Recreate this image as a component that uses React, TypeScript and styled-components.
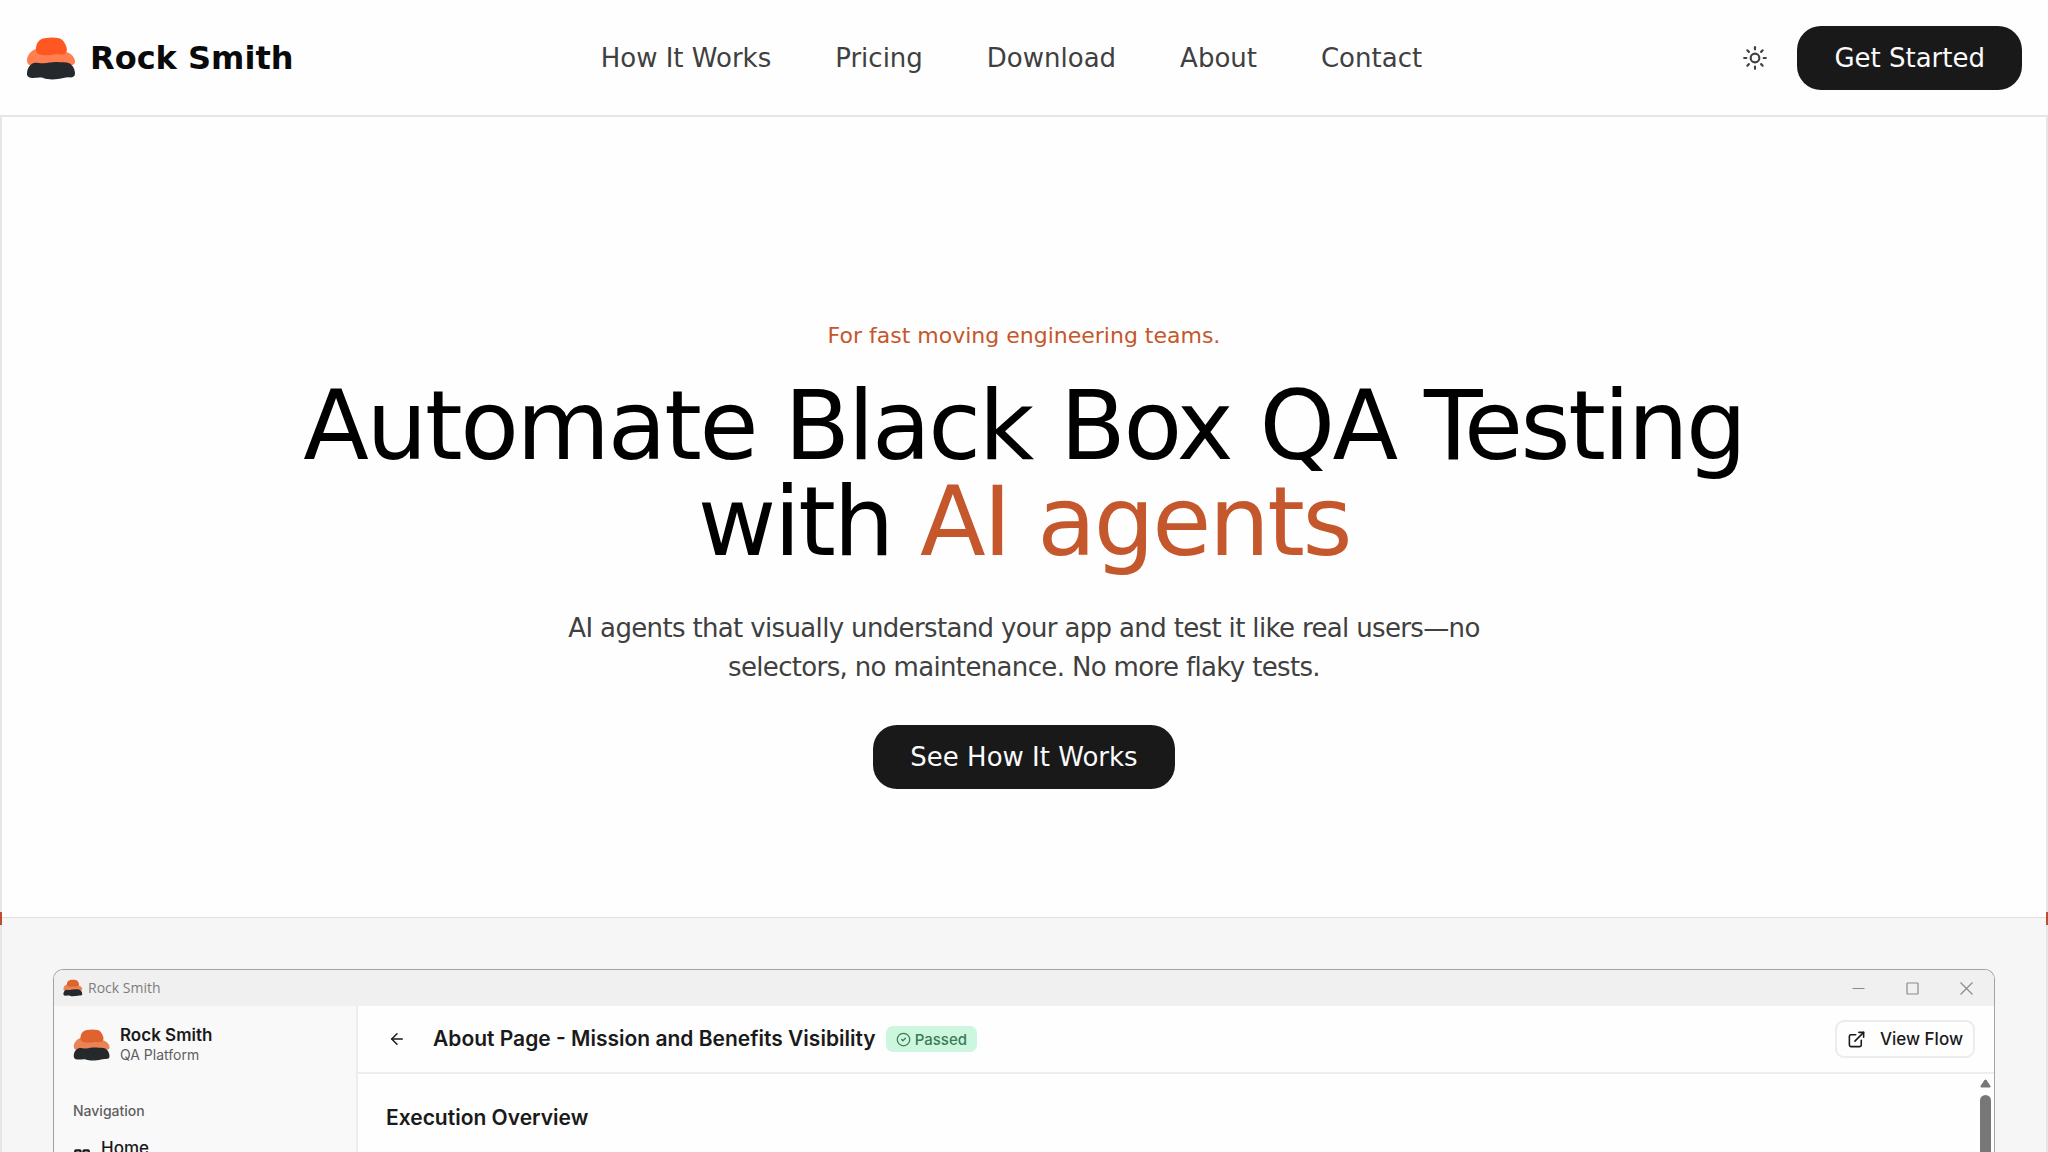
import React from "react";
import styled, { createGlobalStyle } from "styled-components";
import {
  ArrowLeft,
  CircleCheck,
  ExternalLink,
  LayoutGrid,
  Sun,
} from "lucide-react";

const accent = "#c4572b";
const line = "#e5e7e7";
const ink = "#191919";

const GlobalStyle = createGlobalStyle`
  *, *::before, *::after { box-sizing: border-box; }
  body {
    margin: 0;
    background: #fefefe;
    color: #404040;
    font-family: "DejaVu Sans", sans-serif;
  }
  h1, h2, h3, p { margin: 0; font-weight: 400; }
  a { color: inherit; text-decoration: none; }
  button { font: inherit; color: inherit; border: 0; padding: 0; background: none; cursor: pointer; }
`;

const Page = styled.div`
  display: flex;
  flex-direction: column;
  height: 100vh;
  overflow: hidden;
`;

const Header = styled.header`
  display: flex;
  align-items: center;
  justify-content: space-between;
  padding: 26px 26px 25px;
  border-bottom: 2px solid ${line};
`;

const Brand = styled.a`
  display: flex;
  align-items: center;
  gap: 13px;
  color: #0a0a0a;
  font-size: 32px;
  line-height: 45px;
  font-weight: 700;
`;

const Nav = styled.nav`
  display: flex;
  gap: 64px;
  font-size: 26px;
  line-height: 38px;
`;

const Actions = styled.div`
  display: flex;
  align-items: center;
  gap: 16px;
`;

const IconButton = styled.button`
  display: flex;
  padding: 13px;
`;

const Cta = styled.button`
  height: 64px;
  padding: 0 37px;
  border-radius: 24px;
  background: ${ink};
  color: #fafafa;
  font-size: 26px;
  line-height: 38px;
`;

const Main = styled.main`
  flex: 1;
  min-height: 0;
  display: flex;
  flex-direction: column;
  border: solid ${line};
  border-width: 0 2px;
`;

const Hero = styled.section`
  display: flex;
  flex-direction: column;
  align-items: center;
  padding: 203px 26px 128px;
  text-align: center;
`;

const Eyebrow = styled.p`
  margin-bottom: 26px;
  color: ${accent};
  font-size: 22px;
  line-height: 32px;
`;

const Title = styled.h1`
  max-width: 1500px;
  color: #000;
  font-size: 96px;
  line-height: 96px;
  letter-spacing: -0.025em;
`;

const Accent = styled.span`
  color: ${accent};
`;

const Lead = styled.p`
  max-width: 922px;
  margin: 39px 0 38px;
  font-size: 26px;
  line-height: 39px;
  letter-spacing: -0.025em;
`;

const Showcase = styled.section`
  position: relative;
  flex: 1;
  min-height: 0;
  padding: 51px 51px 0;
  border-top: 1px solid #dfdfdf;
  background: #f6f6f6;
`;

const EdgeMark = styled.span<{ $side: "left" | "right" }>`
  position: absolute;
  top: -6px;
  ${(p) => p.$side}: -2px;
  width: 2px;
  height: 13px;
  background: #b84f33;
`;

const Window = styled.div`
  display: flex;
  flex-direction: column;
  height: 100%;
  overflow: hidden;
  border: 1px solid #a3a3a3;
  border-bottom: 0;
  border-radius: 10px 10px 0 0;
  background: #fefefe;
  color: #1a1a1a;
  font-family: Inter, sans-serif;
`;

const TitleBar = styled.div`
  display: flex;
  align-items: center;
  gap: 5px;
  height: 36px;
  flex: none;
  padding: 0 21px 0 9px;
  background: #f0f0f0;
  color: #7d7d7d;
  font-family: "Open Sans", sans-serif;
  font-size: 14px;
  line-height: 20px;
`;

const WindowControls = styled.div`
  display: flex;
  gap: 41px;
  margin-left: auto;
`;

const ControlButton = styled.button`
  display: flex;
`;

const WindowBody = styled.div`
  display: flex;
  flex: 1;
  min-height: 0;
`;

const Sidebar = styled.aside`
  width: 304px;
  flex: none;
  padding: 19px;
  border-right: 2px solid #ededed;
  background: #f9f9f9;
  overflow: hidden;
`;

const Account = styled.div`
  display: flex;
  align-items: center;
  gap: 9px;
`;

const AccountName = styled.h2`
  font-size: 17px;
  line-height: 20px;
  font-weight: 600;
`;

const AccountNote = styled.p`
  color: #5f5f5f;
  font-size: 14px;
  line-height: 20px;
`;

const NavLabel = styled.h3`
  margin: 36px 0 17px;
  color: #5f5f5f;
  font-size: 14px;
  line-height: 20px;
  font-weight: 500;
`;

const SideLink = styled.a`
  display: flex;
  gap: 10px;
  font-size: 17px;
  line-height: 20px;
  font-weight: 500;
`;

const SideIcon = styled.span`
  display: flex;
  padding-top: 10px;
`;

const Content = styled.div`
  flex: 1;
  min-width: 0;
  display: flex;
  flex-direction: column;
`;

const ContentBar = styled.div`
  display: flex;
  align-items: center;
  flex: none;
  height: 68px;
  padding: 0 19px 0 28px;
  border-bottom: 2px solid #ededed;
`;

const SectionTitle = styled.h2`
  font-size: 21px;
  line-height: 28px;
  font-weight: 600;
`;

const BackButton = styled.button`
  display: flex;
  padding: 2px;
  margin-right: 25px;
`;

const Badge = styled.span`
  display: flex;
  align-items: center;
  gap: 4px;
  height: 26px;
  margin-left: 10px;
  padding: 0 10px;
  border-radius: 7px;
  background: #ccf6dd;
  color: #3b7a59;
  font-size: 15px;
  font-weight: 500;
`;

const ViewFlow = styled.button`
  display: flex;
  align-items: center;
  gap: 14px;
  height: 38px;
  margin-left: auto;
  padding: 0 10px;
  border: 2px solid #ececec;
  border-radius: 9px;
  font-size: 17px;
  font-weight: 500;
`;

const ContentArea = styled.div`
  display: flex;
  flex: 1;
  min-height: 0;
  justify-content: space-between;
  padding: 30px 3px 0 28px;
`;

const Scrollbar = styled.div`
  display: flex;
  flex-direction: column;
  gap: 7px;
  width: 11px;
  margin-top: -25px;
`;

const Thumb = styled.div`
  flex: 1;
  border-radius: 6px 6px 0 0;
  background: #777;
`;

function RockLogo({ size, soft = false }: { size: number; soft?: boolean }) {
  const top = soft ? "#e0622f" : "#ff5722";
  const middle = soft ? "#ea8456" : "#ff7f50";
  return (
    <svg width={size} height={size} viewBox="78 96 153 153" aria-hidden="true">
      <path
        fill={middle}
        d="M81 180C80 164 93 149 108 144L199 153C214 157 226 171 225 184C223 193 213 193 205 193H93C86 193 82 188 81 180Z"
      />
      <path
        fill={top}
        d="M108 140C110 124 119 114 134 112C148 109 164 109 177 112C189 115 194 125 199 137C204 151 198 161 183 161C173 161 171 159 158 161C145 163 135 163 124 161C111 159 106 151 108 140Z"
      />
      <path
        fill="#26292b"
        d="M81 216C82 201 90 188 104 185C113 185 120 187 130 187C145 185 158 182 173 183C184 185 197 182 208 187C219 193 225 206 225 218C225 227 218 230 205 229C194 229 188 233 174 234C160 236 143 236 130 231C119 228 110 232 96 231C86 230 80 226 81 216Z"
      />
    </svg>
  );
}

const windowControls = [
  { label: "Minimize", path: "M0.5 6.5h12" },
  { label: "Maximize", path: "M1.5 1h10q.5 0 .5.5v10q0 .5-.5.5h-10q-.5 0-.5-.5v-10q0-.5.5-.5z" },
  { label: "Close", path: "M0.5 0.5l12 12M12.5 0.5l-12 12" },
];

const links = ["How It Works", "Pricing", "Download", "About", "Contact"];

export default function App() {
  return (
    <Page>
      <GlobalStyle />
      <Header>
        <Brand href="#">
          <RockLogo size={51} />
          Rock Smith
        </Brand>
        <Nav>
          {links.map((label) => (
            <a key={label} href="#">
              {label}
            </a>
          ))}
        </Nav>
        <Actions>
          <IconButton aria-label="Toggle theme">
            <Sun size={26} />
          </IconButton>
          <Cta>Get Started</Cta>
        </Actions>
      </Header>
      <Main>
        <Hero>
          <Eyebrow>For fast moving engineering teams.</Eyebrow>
          <Title>
            Automate Black Box QA Testing with <Accent>AI agents</Accent>
          </Title>
          <Lead>
            AI agents that visually understand your app and test it like real
            users—no selectors, no maintenance. No more flaky tests.
          </Lead>
          <Cta>See How It Works</Cta>
        </Hero>
        <Showcase>
          <EdgeMark $side="left" />
          <EdgeMark $side="right" />
          <Window>
            <TitleBar>
              <RockLogo size={20} soft />
              Rock Smith
              <WindowControls>
                {windowControls.map(({ label, path }) => (
                  <ControlButton key={label} aria-label={label}>
                    <svg width="13" height="13" viewBox="0 0 13 13" aria-hidden="true">
                      <path d={path} fill="none" stroke="#8a8a8a" strokeWidth="1.2" />
                    </svg>
                  </ControlButton>
                ))}
              </WindowControls>
            </TitleBar>
            <WindowBody>
              <Sidebar>
                <Account>
                  <RockLogo size={38} soft />
                  <div>
                    <AccountName>Rock Smith</AccountName>
                    <AccountNote>QA Platform</AccountNote>
                  </div>
                </Account>
                <NavLabel>Navigation</NavLabel>
                <SideLink href="#">
                  <SideIcon>
                    <LayoutGrid size={18} strokeWidth={3} />
                  </SideIcon>
                  Home
                </SideLink>
              </Sidebar>
              <Content>
                <ContentBar>
                  <BackButton aria-label="Back">
                    <ArrowLeft size={18} />
                  </BackButton>
                  <SectionTitle>
                    About Page - Mission and Benefits Visibility
                  </SectionTitle>
                  <Badge>
                    <CircleCheck size={15} />
                    Passed
                  </Badge>
                  <ViewFlow>
                    <ExternalLink size={19} />
                    View Flow
                  </ViewFlow>
                </ContentBar>
                <ContentArea>
                  <SectionTitle>Execution Overview</SectionTitle>
                  <Scrollbar>
                    <svg width="11" height="9" viewBox="0 0 11 9" aria-hidden="true">
                      <path
                        d="M5 1h1l4 6v1H1V7z"
                        fill="#777"
                        stroke="#777"
                        strokeLinejoin="round"
                      />
                    </svg>
                    <Thumb />
                  </Scrollbar>
                </ContentArea>
              </Content>
            </WindowBody>
          </Window>
        </Showcase>
      </Main>
    </Page>
  );
}
